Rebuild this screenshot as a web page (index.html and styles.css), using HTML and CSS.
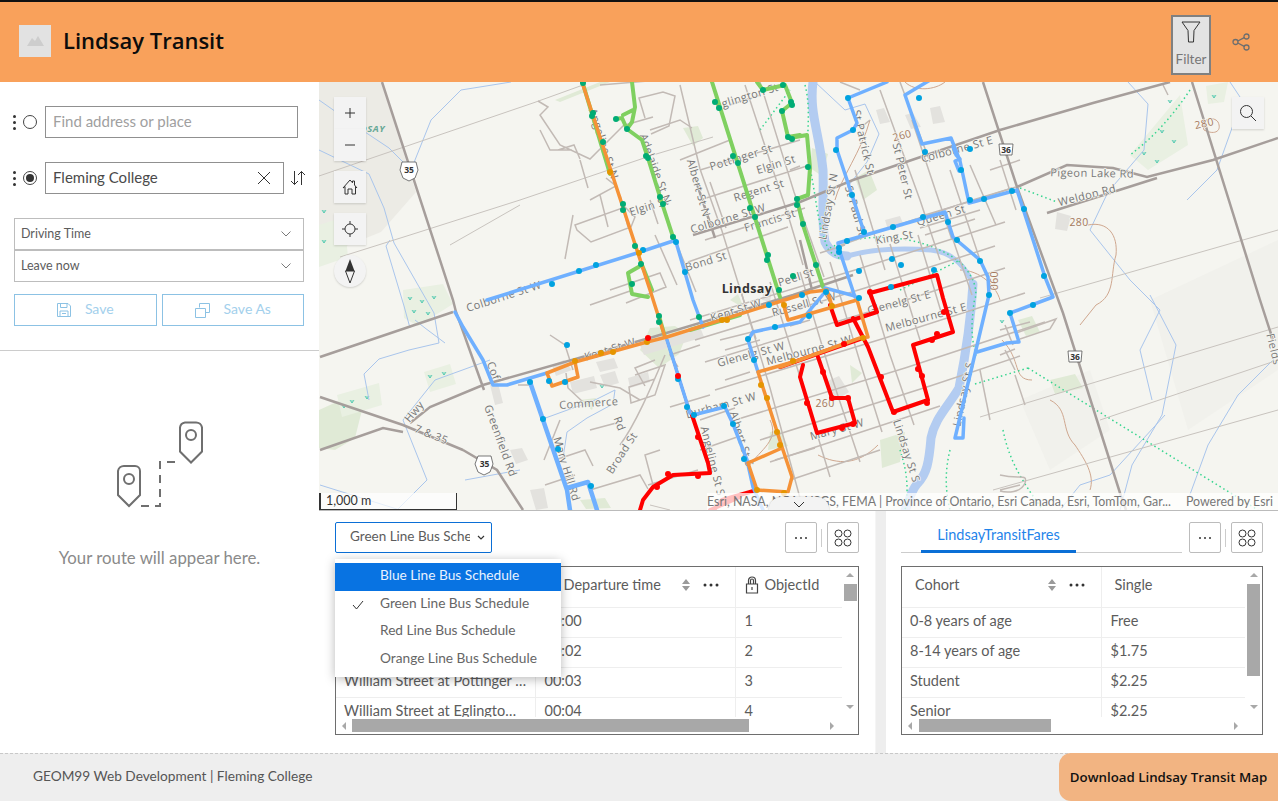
FILE: index.html
```html
<!DOCTYPE html>
<html lang="en">
<head>
<meta charset="utf-8">
<title>Lindsay Transit</title>
<link rel="stylesheet" href="styles.css">
</head>
<body>
<div class="app">
<header class="topbar">
  <div class="logo"><svg width="32" height="32" viewBox="0 0 32 32"><path class="logo-m" d="M8 21l5-8 3 3 3-5 6 10z"/></svg></div>
  <h1 class="title">Lindsay Transit</h1>
  <div class="top-actions">
    <button class="filter-btn"><svg width="20" height="22" viewBox="0 0 20 22"><path class="ico" d="M1 1h18l-6 8.500-.5 11.500h-5L7 9.500z" stroke-width="1.200"/></svg><span>Filter</span></button>
    <svg class="share" width="18" height="18" viewBox="0 0 18 18"><g class="ico-grey"><circle cx="3.500" cy="9" r="2.500"/><circle cx="14.500" cy="3.500" r="2.500"/><circle cx="14.500" cy="14.500" r="2.500"/><path d="M5.800 8l6.400-3.400M5.800 10l6.400 3.400"/></g></svg>
  </div>
</header>
<div class="body">
<aside class="sidebar">
  <section class="form">
    <div class="stop stop-a">
      <span class="grip"><i></i><i></i><i></i></span><span class="radio"></span>
      <div class="input placeholder"><span>Find address or place</span></div>
    </div>
    <div class="stop stop-b">
      <span class="grip"><i></i><i></i><i></i></span><span class="radio on"></span>
      <div class="input"><span>Fleming College</span><svg width="14" height="14" viewBox="0 0 14 14"><path class="ico" d="M1 1l12 12M13 1L1 13"/></svg></div>
      <svg class="swap" width="16" height="16" viewBox="0 0 16 16"><path class="ico" d="M4.500 1v13.500M1 11l3.500 3.500L8 11M11.500 15V1.500M8 5l3.500-3.500L15 5"/></svg>
    </div>
    <div class="selects">
      <div class="select-row"><span>Driving Time</span><svg width="12" height="8" viewBox="0 0 12 8"><path class="chev" d="M1.500 1.500L6 6l4.500-4.500"/></svg></div>
      <div class="select-row"><span>Leave now</span><svg width="12" height="8" viewBox="0 0 12 8"><path class="chev" d="M1.500 1.500L6 6l4.500-4.500"/></svg></div>
    </div>
    <div class="save-row">
      <button class="save"><svg width="14" height="14" viewBox="0 0 14 14"><path class="ico-blue" d="M.5.5h10.500l2.500 2.500v10.500H.5zM3.500.5v4h6.500v-4M3 13.500V8h8v5.500M5 10.500h4"/></svg><span>Save</span></button>
      <button class="save"><svg width="15" height="15" viewBox="0 0 15 15"><path class="ico-blue" d="M4.500 4.500V.5h10v9h-4M.5 5.500h10v9H.5z"/></svg><span>Save As</span></button>
    </div>
  </section>
  <section class="empty">
    <svg width="100" height="100" viewBox="110 415 100 100">
      <g class="pin">
        <path d="M124 466h11a5 5 0 0 1 5 5v24l-11 11-11-11v-24a6 6 0 0 1 6-5z"/>
        <circle cx="129" cy="479" r="5"/>
        <path d="M185 422.500h11a6 6 0 0 1 6 5v24l-11 11-11-11v-24a6 6 0 0 1 5-5z"/>
        <circle cx="191" cy="435" r="5"/>
        <path class="dash" d="M141 506h19v-44h19"/>
      </g>
    </svg>
    <p>Your route will appear here.</p>
  </section>
</aside>
<main class="content">
  <div class="map">
    <svg class="map-svg" width="959" height="429" viewBox="319 82 959 429">
      <rect class="bg" x="319" y="82" width="959" height="429"/>
      <path class="hill" d="M319 82h62l35 110-35 40-62 25z"/>
      <path class="hill-soft" d="M1150 300l128-60v130l-90 60zM1020 400l70-30 20 60-60 40z"/>
      <g class="park">
        <path d="M683 128l15-2 5 12-10 8zM640 350l10-22 25-2 12 8-8 20-20 14zM319 410l22-10 22 6-8 32-20 12-16-2zM580 500l25-2 6 10-25 1zM770 432l10-2 8 16-20 4zM880 440l25-8-5 30-18 6zM1050 380l25-6 8 14-28 6zM855 178l14-8 8 20-14 10zM812 148l16 6-6 22-12-8z"/>
        <path d="M555 100l55-22v4l-50 20zM580 400l16-2-4 12zM1018 320l14-4 8 16-14 4zM850 365l12 8-10 10zM730 300l8-6 6 14z"/>
      </g>
      <g class="wetland">
        <path d="M403 290l40-6 10 20-35 22-14-8zM424 372l26-8 6 20-26 8zM337 395l42-12 3 22-40 12zM1206 86l22-4-4 20-16 2zM1130 155l50-60 8 50-40 25zM319 225l25-8 4 40-29 10z"/>
      </g>
      <path class="wet-ticks" d="M408 297l2 3 2-3m-2 3v-3M420 300l2 3 2-3m-2 3v-3M432 296l2 3 2-3m-2 3v-3M412 310l2 3 2-3m-2 3v-3M426 312l2 3 2-3m-2 3v-3M428 375l2 3 2-3m-2 3v-3M442 372l2 3 2-3m-2 3v-3M350 400l2 3 2-3m-2 3v-3M365 396l2 3 2-3m-2 3v-3M342 405l2 3 2-3m-2 3v-3M1212 95l2 3 2-3m-2 3v-3M1168 100l2 3 2-3m-2 3v-3M1160 130l2 3 2-3m-2 3v-3M1172 140l2 3 2-3m-2 3v-3M1142 152l2 3 2-3m-2 3v-3M1155 160l2 3 2-3m-2 3v-3M322 240l2 3 2-3m-2 3v-3M335 230l2 3 2-3m-2 3v-3M322 210l2 3 2-3m-2 3v-3M600 385l2 3 2-3m-2 3v-3M1000 320l2 3 2-3m-2 3v-3"/>
      <g class="bld">
        <path d="M596 362l18-4 4 10-18 4zM552 365l12-5 8 10-16 6zM570 382l24-6 3 12-24 6zM490 385l5 20 8-2-5-20zM600 375l15-4 4 12-14 4zM628 378l20-6 2 10-20 6zM640 345l60-18 4 10-60 18zM530 490l14-2 4 20-12 2zM510 450l12-2 6 12-12 4zM825 382l14-6 10 16-16 10zM885 220l15-4 4 10-16 4zM876 110l8-2 6 14-10 2zM905 115l8-2 8 14-10 2zM930 108l10-2 5 16-12 2zM1057 212l14 4-4 15-12-2zM764 288l8 2-2 12-8-2z"/>
      </g>
      <g class="stream">
        <path d="M319 100l40 28 30 20 22 22 20-50 30-30 50-8M319 150l50 24 15 34 10 35 40 70 5 30-30 7-30 9-15 15 5 26M390 240l-4 6 18 60 6 22M490 360l-55 20-32 40 24 60-30 30M415 320l10 8 20 15M540 420l55-20 20-10-2 14-26 14-20 14-4 26M320 485l80 25M465 480l55-10"/>
        <path d="M815 82l30 28 20-6 14 30-12 28-22 28M1128 82l20 22-4 46-36 42-18 38 40 50 30 30-20 40 12 50M1150 295l26 50-14 70-30 50-12 45M1278 355l-40 40-30 50-20 55M1165 415l-55 60-30 10-20 25M1230 82l12 18-25 70-30 30"/>
      </g>
      <path class="contour-line" d="M905 82c10 10 30 8 40 0M1088 225c20-4 30 10 28 30-6 20 0 40-20 50l-16 20M1050 400c20 10 10 30 25 45 10 15 20 30 15 45M770 420c10 20-10 30-20 45M818 455c20 10 40 10 60-10M1204 130c-4-12 10-14 14-8 4 8-2 14-14 8zM870 120c-8 30-30 60-35 80M960 270c20 0 36 16 40 30M1002 340c20 20 10 40 30 40"/>
      <path class="river" d="M813 82c-4 30 6 50 10 88 1 30-2 50 2 72 5 10 12 14 22 14"/>
      <path class="river river-thin" d="M847 256c28-8 56-8 84-6 22 2 34 16 42 34"/>
      <path class="river" d="M973 284c-2 35-8 74-14 104-12 20-24 30-28 50-2 24-4 36-14 46-8 10-8 20-12 26"/>
      <g class="trail">
        <path d="M1028 368l230 142M975 384l53-16M1020 188l37 14M1003 430c6 30 18 50 40 80M900 450c5 15 10 35 5 60M950 450c-5 20-5 40 0 60M830 248c30-16 90-16 130 14 10 10 20 26 14 40-2 20-4 30 2 54M805 85c8 30-2 60 6 88 6 30 6 50 18 78l14 10M1190 90c-20 30-40 50-60 65M760 130l30-40M900 290l60-30"/>
      </g>
      <g class="road-thin">
        <path d="M319 176l214-73 50-18M340 257l70-22 110-35 133-45 60-18M450 245l70-40M1040 298l238-68M980 417l298-90M993 490l285-80M650 505l20 5M1100 420l178-60"/>
      </g>
      <g class="road">
        <path d="M538 101l10 6-8 8 20 30 30 14 20-20 15-15M540 130l10 20 22 0M558 150l16-5 6 14M575 225l50-18 10 10-4 10-40 15-14-12zM573 215l-8 44M600 195l8 32M620 195l8 32M580 160l8 28M590 200l26-14-10-8M650 200l8 24M645 118l-6-20 24-6 12 4-6 30-18 8M625 125l28-8M600 85l60-5M680 160l50-20M710 182l16 46M655 235l22 50M676 242l20 50M730 105l30-10M610 290l50-17 6 14-40 16M590 305l40-14"/>
        <path d="M650 130l30-10 12 8M680 85l20 84 22 62 18 58 16 50M745 85l18 55 25 75 15 50M760 82l34 110 30 85M700 170l100-30M700 200l110-35M688 262l100-35M705 240l100-32"/>
        <path d="M690 320l165-50 150-48M695 340l170-52 130-42M705 362l170-52 130-42M715 390l170-52 140-45M735 420l170-52 140-46M760 440l170-54 90-30M770 462l140-46 30-10M790 480l90-30"/>
        <path d="M740 288l30 100 30 110M770 282l30 95 30 100M800 272l30 100 30 90M830 262l30 100 22 70M860 255l30 100 24 70M890 244l30 96M918 235l24 80M948 225l24 70M912 120l40 120M950 170l30 90M970 165l26 60M1000 160l16 50M990 170l30-10M982 198l30-10M925 215l60-18M925 235l50-16M1000 330l30-8M1016 333l40-14 -6 10-30 10M1005 325l8 20M1000 355l15-6M980 370l10 50M1005 350l10 20M1015 375l10 30M1000 475c20 5 28-2 25 8-4 10-18 10-25 8M1000 490l20-5"/>
        <path d="M860 90l-20-8M870 120l-10 8M880 90l40 110 20 60M855 170l30 100M900 82l30 80M550 335l15 10 8 25M655 360l-20 8 10 18M640 400l-20-12-30-6M635 375l30-10-10 30-24 8 -2-16 26-8M665 355c-15 35-30 70-45 90M590 430l30-8M555 460l30-10 8 16M590 490l50-15 8 14M648 485l50-15M545 485l30-10M700 345l-30 10 8 12M710 395l-40 12M700 420l35-12M760 330l-40 10M725 350l35-10M725 380l25-8M660 450l-15 5 8 30M700 450l40-14M775 460l40-12"/>
        <path d="M566 373l2 15 15 14M560 420l-16 40M530 385l-12 0M1163 85l5 10"/>
      </g>
      <g class="road-major">
        <path d="M382 82l71 218 3 12 28 78M463 450l34 20 26 40M320 357l133-45M320 397l83 28 60 25M320 450l63-22 20 4M410 423l20-16 53-22 170-48 140-42 60-20M693 235l107-33 53-22 147-50 93-27 77-21M1017 187l50-22 46 3 34 9 66-17 65-22M1047 213l110-35M983 82l34 105 46 126 57 180 6 17M1192 82l68 218 13 40M695 178l20 60M800 240l12 50"/>
      </g>
      <path class="road" d="M1016 187l-40 12-90 30-50 18M980 210l-60 18M845 245l-25 8M810 320l-20 6M790 170l10-4"/>
      <g class="lbl">
        <text transform="translate(505 300) rotate(-18)">Colborne St W</text>
        <text transform="translate(729 222) rotate(-17)">Colborne St W</text>
        <text transform="translate(611 353) rotate(-17)">Kent St W</text>
        <text transform="translate(737 314) rotate(-17)">Kent St W</text>
        <text transform="translate(707 265) rotate(-17)">Bond St</text>
        <text transform="translate(650 210) rotate(-17)">Elgin St</text>
        <text transform="translate(777 168) rotate(-17)">Elgin St</text>
        <text transform="translate(742 161) rotate(-17)">Pottinger St</text>
        <text transform="translate(760 194) rotate(-17)">Regent St</text>
        <text transform="translate(771 224) rotate(-17)">Francis St</text>
        <text transform="translate(748 100) rotate(-17)">Eglington St</text>
        <text transform="translate(797 281) rotate(-17)">Peel St</text>
        <text transform="translate(695 189) rotate(74)">Albert St N</text>
        <text transform="translate(600 145) rotate(72)">Angeline St N</text>
        <text transform="translate(652 170) rotate(70)">Adelaide St N</text>
        <text transform="translate(860 143) rotate(77)">St Patrick St</text>
        <text transform="translate(852 212) rotate(74)">St Paul St</text>
        <text transform="translate(899 172) rotate(77)">St Peter St</text>
        <text transform="translate(832 207) rotate(-80)">Lindsay St N</text>
        <text transform="translate(958 153) rotate(-15)">Colborne St E</text>
        <text transform="translate(942 219) rotate(-16)">Queen St</text>
        <text transform="translate(895 241) rotate(-10)">King St</text>
        <text transform="translate(1092 177) rotate(1)">Pigeon Lake Rd</text>
        <text transform="translate(1088 199) rotate(-14)">Weldon Rd</text>
        <text transform="translate(900 306) rotate(-15)">Glenelg St E</text>
        <text transform="translate(927 321) rotate(-15)">Melbourne St E</text>
        <text transform="translate(752 358) rotate(-15)">Glenelg St W</text>
        <text transform="translate(722 409) rotate(-15)">Durham St W</text>
        <text transform="translate(810 354) rotate(-15)">Melbourne St W</text>
        <text transform="translate(805 308) rotate(-15)">Russell St W</text>
        <text transform="translate(838 433) rotate(-15)">Mary St W</text>
        <text transform="translate(903 452) rotate(72)">Lindsay St S</text>
        <text transform="translate(967 395) rotate(-78)">Lindsay St S</text>
        <text transform="translate(589 407) rotate(-4)">Commerce</text>
        <text transform="translate(616 425) rotate(70)">Rd</text>
        <text transform="translate(625 455) rotate(-57)">Broad St</text>
        <text transform="translate(497 442) rotate(70)">Greenfield Rd</text>
        <text transform="translate(417 414) rotate(-50)">Hwy</text>
        <text transform="translate(430 438) rotate(22)">7 &amp; 35</text>
        <text transform="translate(709 462) rotate(76)">Angeline St S</text>
        <text transform="translate(738 440) rotate(73)">Albert St S</text>
        <text transform="translate(563 470) rotate(73)">Mary Hill Rd</text>
        <text transform="translate(490 372) rotate(70)">Cof</text>
        <text transform="translate(1270 350) rotate(76)">Fields</text>
        <text class="contour" transform="translate(903 139) rotate(-15)">260</text>
        <text class="contour" transform="translate(1205 127) rotate(-12)">280</text>
        <text class="contour" transform="translate(1079 226)">280</text>
        <text class="contour" transform="translate(825 407)">260</text>
        <text class="contour" transform="translate(990 281) rotate(90)">090</text>
      </g>
      <g class="routes">
        <path class="r-red" d="M667 340l23 73"/>
        <path class="r-red-t" d="M692 415l16 48 2 10-37 2-20 12-10 13-3 10M870 293l67-18 6 23 10 34-40 13 15 55-35 12-25-65 -15-29M877 312l-40 13-7-20M870 293l7 19M818 357l14 41h16l7 25-38 10-17-56 3-12M780 367l80-28M757 490l-35 10-8 10M740 497l-30 13"/>
        <path class="r-green" d="M712 82l68 215M632 82l3 25-3 15-5 7-5-11-6 1M623 115l10-5M627 129l15 11 6 18 12 39 13 40 3 5M642 265l-14 8 4 21 16 3M642 265l10 25M583 84l27 90M757 82l6 8 22-5 7 18-10 8 6 26 12-2M790 138l17-3 3 33-2 27-11 4 6 26 20 62M659 316l6 21M690 330l50-15"/>
        <path class="r-blue" d="M487 300l150-47 36-12 3 1 17 58 10 27M455 312l8 15 20 33 10 25h14l40-12M693 415l32-8 8 17 14 36 6 27 10 23M748 340l5-8 47-10 25-30M748 340l10 32M667 340l23 73M1010 313l43-16 -8-20-28-87-44 12-4 1-9-42-9-23 -29 6-17-49 52-31M848 98l9 25-4 7-16 8v12l15 45 12 37M848 98l39-16M838 243l107-31 8 25 27 23 8 17 1 18-34 143 8 0 1-20M977 352l30-9 12-1-9-29M838 243l2 9 15 45M855 296l-30-8"/>
        <path class="r-blue-w" d="M530 382l37 108 3 20M567 488l21-6 9 28"/>
        <path class="r-blue" d="M953 147l3 8 4 4-5 2 4 10"/>
        <path class="r-orange" d="M582 82l68 208 15 47M667 337l-20 5-72 20-28 11 5 13 26-9-3-15M667 337l143-45 17-2M783 303l5 17 69-20 11 37-8 1-80 29M758 372l24 75 10 30-4 15-31-2M748 463l34-15M748 463l9 27M758 372l42-12M827 290l5 16"/>
      </g>
      <g class="dot d-green"><path d="M583 83h0M593 113h0M592 116h0M603 142h0M616 119h0M627 129h0M646 156h0M648 158h0M660 197h0M663 204h0M623 204h0M623 210h0M635 246h0M641 264h0M632 284h0M673 237h0M715 102h0M719 108h0M733 156h0M738 163h0M750 208h0M755 217h0M768 255h0M767 260h0M779 290h0M793 276h0M763 90h0M783 85h0M791 102h0M792 105h0M782 111h0M788 137h0M792 139h0M797 199h0M797 205h0M808 167h0M803 224h0M816 265h0M659 316h0M659 322h0M699 317h0"/></g>
      <g class="dot d-blue"><path d="M552 284h0M579 271h0M596 265h0M643 250h0M676 242h0M685 272h0M848 98h0M853 130h0M836 150h0M852 195h0M864 232h0M847 241h0M839 248h0M839 252h0M893 227h0M923 217h0M948 222h0M957 240h0M980 261h0M989 295h0M1044 276h0M1024 209h0M1012 191h0M984 199h0M970 200h0M961 170h0M970 149h0M925 152h0M919 98h0M892 259h0M901 265h0M859 271h0M826 292h0M802 295h0M859 298h0M891 287h0M934 270h0M1010 313h0M1033 305h0M809 316h0M567 345h0M530 382h0M543 419h0M558 449h0M591 486h0M549 381h0M565 382h0M678 379h0M687 407h0M694 415h0M724 406h0M733 424h0M744 459h0M748 339h0M754 360h0M775 327h0M769 305h0"/></g>
      <g class="dot d-orange"><path d="M575 361h0M601 353h0M613 352h0M647 342h0M722 320h0M727 320h0M784 305h0M761 385h0M767 398h0M777 432h0M780 445h0M793 361h0M757 490h0M784 493h0M863 338h0M832 306h0M610 172h0M639 253h0"/></g>
      <g class="dot d-red"><path d="M678 376h0M648 338h0M698 437h0M668 474h0M698 476h0M657 487h0M944 312h0M937 334h0M932 340h0M918 369h0M922 376h0M927 403h0M894 412h0M881 377h0M844 344h0M823 372h0M807 403h0M848 398h0M832 398h0M842 428h0M853 424h0M870 292h0"/></g>
      <text class="city" x="747" y="293">Lindsay</text>
      <text class="area" x="385" y="132">LINDSAY</text>
      <g class="shield">
        <path d="M402 162h14l2 8-3 8-6 3-6-3-3-8z"/><text x="409" y="173">35</text>
        <path d="M478 456h13l2 8-3 8-6 3-6-3-3-8z"/><text x="484.500" y="467">35</text>
        <path d="M999 144h14l-1 11h-12z"/><text x="1006" y="153">36</text>
        <path d="M1068 351h14l-1 11h-12z"/><text x="1075" y="360">36</text>
      </g>
    </svg>
    <div class="map-tools">
      <div class="tool-group">
        <button class="tool"><svg width="12" height="12" viewBox="0 0 12 12"><path class="ico" d="M6 1v10M1 6h10"/></svg></button>
        <button class="tool"><svg width="12" height="12" viewBox="0 0 12 12"><path class="ico" d="M1 6h10"/></svg></button>
      </div>
      <button class="tool"><svg width="16" height="16" viewBox="0 0 16 16"><path class="ico" d="M3 15V7.500L1 9l7-8 2.500 2.800V2h2v4l2.500 3-1.500-1.500V15H10v-5H6v5z"/></svg></button>
      <button class="tool"><svg width="16" height="16" viewBox="0 0 16 16"><g class="ico"><circle cx="8" cy="8" r="5"/><path d="M8 0v3M8 13v3M0 8h3M13 8h3"/></g></svg></button>
      <button class="tool round"><svg width="10" height="24" viewBox="0 0 10 24"><path class="needle" d="M5 0L.5 12h9z"/><path class="ico" d="M.5 12h9L5 24z"/></svg></button>
    </div>
    <button class="tool search"><svg width="18" height="18" viewBox="0 0 18 18"><g class="ico"><circle cx="7.500" cy="7.500" r="6"/><path d="M12 12l5 5"/></g></svg></button>
    <div class="scale">1,000 m</div>
    <div class="attrib"><span class="attrib-src">Esri, NASA, NGA, USGS, FEMA | Province of Ontario, Esri Canada, Esri, TomTom, Gar...</span><span>Powered by Esri</span></div>
    <button class="collapse"><svg width="12" height="7" viewBox="0 0 12 7"><path class="ico" d="M1 1l5 5 5-5"/></svg></button>
  </div>
  <div class="panels">
    <section class="panel panel-left">
      <div class="panel-bar">
        <button class="ddl"><span class="ddl-text">Green Line Bus Schedule</span><svg width="8" height="6" viewBox="0 0 8 6"><path class="ddl-chev" d="M1 1l3 3 3-3"/></svg></button>
        <div class="bar-actions">
          <button class="sq"><svg width="14" height="4" viewBox="0 0 14 4"><g class="dots3"><circle cx="2" cy="2" r="1"/><circle cx="7" cy="2" r="1"/><circle cx="12" cy="2" r="1"/></g></svg></button>
          <span class="sep"></span>
          <button class="sq"><svg width="18" height="18" viewBox="0 0 18 18"><g class="ico"><circle cx="4.500" cy="4.500" r="3.500"/><circle cx="13.500" cy="4.500" r="3.500"/><circle cx="4.500" cy="13.500" r="3.500"/><circle cx="13.500" cy="13.500" r="3.500"/></g></svg></button>
        </div>
      </div>
      <div class="grid-box">
        <div class="grid-view">
          <table class="tbl tbl-left">
            <colgroup><col class="c199"><col class="c200"><col></colgroup>
            <thead><tr>
              <th><div class="th"><span class="th-label">Stop</span></div></th>
              <th><div class="th locked"><span class="th-label">Departure time</span><svg class="sort" width="8" height="12" viewBox="0 0 8 12"><path d="M4 0l4 5H0zM4 12L0 7h8z"/></svg><svg class="more" width="16" height="4" viewBox="0 0 16 4"><circle cx="2" cy="2" r="1.500"/><circle cx="8" cy="2" r="1.500"/><circle cx="14" cy="2" r="1.500"/></svg></div></th>
              <th><div class="th lock-th"><svg width="14" height="18" viewBox="0 0 14 18"><path class="lock" d="M1.500 8h11v9h-11zM3.500 8V4.500a3.500 3.500 0 0 1 7 0V8M5.500 8V4.500a1.500 1.500 0 0 1 3 0V8M7 11v3"/></svg><span class="th-label">ObjectId</span></div></th>
            </tr></thead>
            <tbody>
              <tr><td>Lindsay Square Mall</td><td>00:00</td><td>1</td></tr>
              <tr><td>William Street at Orchard</td><td>00:02</td><td>2</td></tr>
              <tr><td>William Street at Pottinger …</td><td>00:03</td><td>3</td></tr>
              <tr><td>William Street at Eglingto…</td><td>00:04</td><td>4</td></tr>
            </tbody>
          </table>
          <div class="vbar"><i class="up"></i><b class="v-thumb-left"></b><i class="down"></i></div>
        </div>
        <div class="hbar"><i class="left"></i><div class="h-track"><b class="h-thumb-left"></b></div><i class="right"></i></div>
      </div>
      <ul class="menu">
        <li class="active">Blue Line Bus Schedule</li>
        <li><svg width="12" height="10" viewBox="0 0 12 10"><path class="ico" d="M1 5l3.500 4L11 1"/></svg>Green Line Bus Schedule</li>
        <li>Red Line Bus Schedule</li>
        <li>Orange Line Bus Schedule</li>
      </ul>
    </section>
    <div class="gutter"></div>
    <section class="panel panel-right">
      <div class="panel-bar">
        <div class="tabs"><span class="tab">LindsayTransitFares</span></div>
        <div class="bar-actions">
          <button class="sq"><svg width="14" height="4" viewBox="0 0 14 4"><g class="dots3"><circle cx="2" cy="2" r="1"/><circle cx="7" cy="2" r="1"/><circle cx="12" cy="2" r="1"/></g></svg></button>
          <span class="sep"></span>
          <button class="sq"><svg width="18" height="18" viewBox="0 0 18 18"><g class="ico"><circle cx="4.500" cy="4.500" r="3.500"/><circle cx="13.500" cy="4.500" r="3.500"/><circle cx="4.500" cy="13.500" r="3.500"/><circle cx="13.500" cy="13.500" r="3.500"/></g></svg></button>
        </div>
      </div>
      <div class="grid-box">
        <div class="grid-view">
          <table class="tbl tbl-right">
            <colgroup><col class="c199"><col></colgroup>
            <thead><tr>
              <th><div class="th plain"><span class="th-label">Cohort</span><svg class="sort" width="8" height="12" viewBox="0 0 8 12"><path d="M4 0l4 5H0zM4 12L0 7h8z"/></svg><svg class="more" width="16" height="4" viewBox="0 0 16 4"><circle cx="2" cy="2" r="1.500"/><circle cx="8" cy="2" r="1.500"/><circle cx="14" cy="2" r="1.500"/></svg></div></th>
              <th><div class="th plain"><span class="th-label">Single</span></div></th>
            </tr></thead>
            <tbody>
              <tr><td>0-8 years of age</td><td>Free</td></tr>
              <tr><td>8-14 years of age</td><td>$1.75</td></tr>
              <tr><td>Student</td><td>$2.25</td></tr>
              <tr><td>Senior</td><td>$2.25</td></tr>
            </tbody>
          </table>
          <div class="vbar vbar-wide"><i class="up"></i><b class="v-thumb-right"></b><i class="down"></i></div>
        </div>
        <div class="hbar"><i class="left"></i><div class="h-track"><b class="h-thumb-right"></b></div><i class="right"></i></div>
      </div>
    </section>
  </div>
</main>
</div>
<footer class="footer">
  <span class="foot-text">GEOM99 Web Development | Fleming College</span>
  <button class="download">Download Lindsay Transit Map</button>
</footer>
</div>
</body>
</html>
```
FILE: styles.css
```css
* { box-sizing: border-box; }
html, body { margin: 0; height: 100%; }
body { font-family: "Lato", "Liberation Sans", sans-serif; font-size: 14px; color: #5c5c5c; background: #fff; overflow: hidden; }
button { font: inherit; color: inherit; padding: 0; background: none; border: 0; }
.app { display: flex; flex-direction: column; height: 801px; width: 1278px; }

.topbar { height: 82px; flex: none; background: #f9a15b; border-top: 2px solid #111; display: flex; align-items: center; padding-left: 19px; }
.logo { width: 32px; height: 32px; background: #e2e2e2; margin-top: -2px; }
.logo-m { fill: #cdcdcd; }
.title { margin: -4px 0 0 12px; font: 600 22px "Open Sans", sans-serif; color: #0c0c0c; }
.top-actions { margin-left: auto; display: flex; align-items: center; }
.filter-btn { width: 40px; height: 60px; background: #e3e3e3; border: 2px solid #808080; display: flex; flex-direction: column; align-items: center; padding-top: 4px; gap: 8px; font-size: 13.500px; line-height: 16px; color: #777; margin-top: 6px; }
.share { margin: 0 28px 0 21px; }
.ico, .ico-grey, .ico-blue, .chev, .pin, .lock, .dots3 { fill: none; stroke-width: 1; }
.ico { stroke: #333; }
.ico-grey { stroke: #6e6e6e; stroke-width: 1.300; }
.ico-blue { stroke: #8cc2e4; }
.chev { stroke: #7a7a7a; }

.body { flex: 1; display: flex; min-height: 0; }
.sidebar { width: 319px; flex: none; display: flex; flex-direction: column; }
.form { padding: 24px 15px 24px 14px; display: flex; flex-direction: column; border-bottom: 1px solid #ccc; height: 269px; }
.stop { display: flex; align-items: center; height: 32px; margin-left: -1px; margin-bottom: 24px; }
.grip { display: flex; flex-direction: column; gap: 3px; width: 3px; margin-right: 7px; }
.grip i { width: 3px; height: 3px; background: #333; border-radius: 50%; }
.radio { width: 14px; height: 14px; border: 1px solid #444; border-radius: 50%; margin-right: 8px; flex: none; position: relative; }
.radio.on::after { content: ""; display: block; width: 8px; height: 8px; margin: 2px; border-radius: 50%; background: #333; }
.input { height: 32px; border: 1px solid #909090; flex: none; display: flex; align-items: center; padding: 0 8px 0 7px; justify-content: space-between; color: #4a4a4a; font-size: 15px; }
.input span { padding-bottom: 3px; }
.stop-a .input { width: 253px; }
.stop-b .input { width: 239px; padding-right: 12px; }
.input.placeholder { color: #a0a0a0; }
.swap { margin-left: 6px; flex: none; }
.selects { display: flex; flex-direction: column; }
.select-row { height: 32px; border: 1px solid #bdbdbd; display: flex; align-items: center; justify-content: space-between; padding: 0 11px 0 6px; font-size: 12.500px; color: #5c5c5c; }
.select-row span { padding-bottom: 2px; }
.save-row { display: flex; gap: 5px; margin-top: 12px; }
.save { height: 32px; flex: 1; border: 1px solid #8cc2e4; color: #a3d0ec; display: flex; align-items: center; justify-content: center; gap: 14px; }
.save span { padding-bottom: 3px; }
.empty { flex: 1; display: flex; flex-direction: column; align-items: center; padding-top: 64px; }
.empty svg { display: block; }
.pin { stroke: #6f6f6f; stroke-width: 2; }
.dash { stroke-dasharray: 8 6; }
.empty p { margin: 33px 0 0; font-size: 16.800px; color: #8a8a8a; line-height: 20px; }

.content { flex: 1; display: flex; flex-direction: column; min-width: 0; }
.map { height: 429px; flex: none; position: relative; overflow: hidden; }
.map-svg { display: block; }
.bg { fill: #f5f5f0; }
.hill { fill: #ecebe5; }
.hill-soft { fill: #f1f1ec; }
.park path { fill: #e0ead6; }
.wetland path { fill: #e9f0e2; }
.wet-ticks { fill: none; stroke: #5fcdb4; stroke-width: 1; }
.bld path { fill: #e3e2de; }
.stream { fill: none; stroke: #a9c5ec; stroke-width: 1; }
.contour-line { fill: none; stroke: #cfa78f; stroke-width: 1; }
.river { fill: none; stroke: #b3ccf1; stroke-width: 9; stroke-linejoin: round; stroke-linecap: round; }
.river-thin { stroke-width: 5; }
.trail { fill: none; stroke: #37d58f; stroke-width: 1.500; stroke-dasharray: 1.500 3; }
.road-thin { fill: none; stroke: #c8c3be; stroke-width: 1; }
.road { fill: none; stroke: #c2bab5; stroke-width: 1.500; }
.road-major { fill: none; stroke: #a69e9b; stroke-width: 2.500; }
.routes path { fill: none; stroke-linejoin: round; stroke-linecap: round; }
.r-red { stroke: #f00; stroke-width: 2.500; }
.r-red-t { stroke: #f00; stroke-width: 4; }
.r-green { stroke: #7fd060; stroke-width: 4; }
.r-blue { stroke: #6fb0ff; stroke-width: 3.500; }
.r-blue-w { stroke: #6fb0ff; stroke-width: 4.500; }
.r-orange { stroke: #f59237; stroke-width: 3.500; }
.dot path { fill: none; stroke-width: 6; stroke-linecap: round; }
.d-green path { stroke: #00ac75; }
.d-blue path { stroke: #00a2e0; }
.d-orange path { stroke: #e59500; }
.d-red path { stroke: #f00; }
.lbl text { font: 11px "Open Sans", sans-serif; fill: #777; stroke: #f5f5f0; stroke-width: 1.500; paint-order: stroke; text-anchor: middle; letter-spacing: .4px; }
.lbl text.contour { fill: #a4785c; font-size: 10.500px; }
.city { font: 700 12.500px "Open Sans", sans-serif; fill: #333; stroke: #f5f5f0; stroke-width: 2; paint-order: stroke; text-anchor: middle; letter-spacing: .4px; }
.area { font: italic 700 9.500px "Open Sans", sans-serif; fill: #68a896; text-anchor: end; letter-spacing: .5px; }
.shield path { fill: #fff; stroke: #555; stroke-width: .8; }
.shield text { font: 700 8.500px "Open Sans", sans-serif; fill: #333; text-anchor: middle; }

.map-tools { position: absolute; left: 15px; top: 15px; display: flex; flex-direction: column; gap: 10px; }
.tool-group { display: flex; flex-direction: column; }
.tool { width: 32px; height: 32px; background: #f3f3f3; display: flex; align-items: center; justify-content: center; box-shadow: 0 1px 2px rgba(0,0,0,.15); }
.tool.round { border-radius: 50%; }
.needle { fill: #333; }
.search { position: absolute; right: 14px; top: 15px; }
.scale { position: absolute; left: 0; bottom: 0; width: 138px; height: 18px; background: rgba(255,255,255,.7); border: 1px solid #333; border-width: 0 1px 2px 2px; font-size: 12.500px; padding-left: 5px; line-height: 15px; color: #333; }
.attrib { position: absolute; left: 388px; right: 0; bottom: 0; height: 18px; background: rgba(255,255,255,.75); display: flex; justify-content: space-between; padding: 0 5px 0 0; font-size: 12.400px; line-height: 17px; color: #777; white-space: nowrap; }
.attrib-src { width: 470px; overflow: hidden; }
.collapse { position: absolute; left: 450px; bottom: 0; width: 60px; height: 14px; background: #f3f3f3; border-radius: 12px 12px 0 0; display: flex; align-items: center; justify-content: center; box-shadow: 0 0 2px rgba(0,0,0,.25); }

.panels { flex: 1; display: flex; border-top: 1px solid #bbb; min-height: 0; margin-top: -1px; position: relative; background: #fff; }
.panel { position: relative; display: flex; flex-direction: column; }
.panel-left { width: 556px; padding: 11px 16px 0 16px; }
.panel-right { flex: 1; padding: 11px 15px 0 15px; }
.gutter { width: 11px; background: #eee; border-left: 1px solid #f5f5f5; }
.panel-bar { display: flex; justify-content: space-between; height: 31px; margin-bottom: 13px; }
.ddl { width: 157px; height: 31px; border: 1px solid #0b6fd6; border-radius: 2px; display: flex; align-items: center; padding: 0 6px 0 14px; justify-content: space-between; font-size: 13.500px; }
.ddl-text { width: 120px; overflow: hidden; white-space: nowrap; text-align: left; padding-bottom: 3px; }
.ddl-chev { fill: none; stroke: #333; stroke-width: 1.200; }
.bar-actions { display: flex; align-items: center; }
.sq { width: 32px; height: 31px; border: 1px solid #bcbcbc; border-radius: 2px; display: flex; align-items: center; justify-content: center; }
.sep { width: 1px; height: 18px; background: #ccc; margin: 0 5px 0 4px; }
.dots3 { fill: #333; }
.tabs { width: 281px; border-bottom: 1px solid #ccc; height: 31px; padding-left: 20px; }
.tab { display: block; width: 155px; height: 31px; border-bottom: 3px solid #0b6fd6; color: #1f84ea; text-align: center; line-height: 26px; font-size: 14.500px; white-space: nowrap; }

.grid-box { border: 1px solid #6e6e6e; height: 169px; display: flex; flex-direction: column; overflow: hidden; }
.grid-view { display: flex; height: 150px; flex: none; overflow: hidden; }
.tbl { border-collapse: collapse; table-layout: fixed; flex: 1; width: 0; align-self: flex-start; }
.c199 { width: 199px; }
.c200 { width: 200px; }
.tbl th { height: 40px; padding: 0; font-weight: 400; border-right: 1px solid #eee; border-bottom: 1px solid #eee; text-align: left; }
.tbl td { height: 30px; padding: 0 9px 3px; border-right: 1px solid #eee; border-bottom: 1px solid #eee; white-space: nowrap; overflow: hidden; font-size: 14.500px; color: #5c5c5c; }
.tbl td:first-child { padding-left: 8px; }
.tbl tr > :last-child { border-right: 0; }
.th { display: flex; align-items: center; padding: 0 16px 4px 13px; height: 39px; font-size: 14.500px; }
.th.locked { padding-left: 28px; }
.th.lock-th { padding-left: 9px; gap: 6px; }
.th-label { flex: 1; }
.sort { fill: #9a9a9a; margin-right: 13px; }
.more { fill: #333; }
.lock { stroke: #444; stroke-width: 1.200; }
.vbar { width: 16px; flex: none; display: flex; flex-direction: column; align-items: center; padding-top: 6px; position: relative; }
.vbar-wide { width: 17px; }
.vbar i, .hbar i { display: block; width: 0; height: 0; border: 4px solid transparent; flex: none; }
.vbar .up { border-bottom: 4px solid #a8a8a8; border-top: 0; }
.vbar .down { border-top: 4px solid #a8a8a8; border-bottom: 0; position: absolute; bottom: 8px; }
.v-thumb-left { width: 13px; height: 17px; background: #a8a8a8; margin-top: 7px; }
.v-thumb-right { width: 13px; height: 92px; background: #a8a8a8; margin-top: 7px; }
.hbar { flex: 1; display: flex; align-items: center; padding: 0 24px 0 6px; }
.hbar .left { border-right: 4px solid #a8a8a8; border-left: 0; }
.hbar .right { border-left: 4px solid #a8a8a8; border-right: 0; }
.h-track { flex: 1; height: 13px; }
.h-track b { display: block; height: 13px; background: #a8a8a8; }
.h-thumb-left { width: 397px; margin-left: 6px; }
.h-thumb-right { width: 132px; margin-left: 7px; }

.menu { position: absolute; left: 16px; top: 48px; width: 226px; height: 118px; margin: 0; padding: 4px 0 0; list-style: none; background: #fff; box-shadow: 0 2px 10px rgba(0,0,0,.28); font-size: 13.700px; color: #666; }
.menu li { height: 27.500px; line-height: 24px; padding-left: 45px; position: relative; white-space: nowrap; }
.menu li svg { position: absolute; left: 17px; top: 9px; }
.menu .active { background: #0873e2; color: #e8f2ff; }

.footer { height: 48px; flex: none; background: #eee; border-top: 1px dashed #c8c8c8; display: flex; align-items: center; justify-content: space-between; padding-left: 33px; }
.foot-text { font-size: 13.700px; color: #555; padding-bottom: 4px; }
.download { width: 219px; height: 48px; margin-top: -1px; background: #f2b482; border-radius: 12px 0 0 12px; font: 600 13.300px "Open Sans", sans-serif; color: #111; padding-bottom: 1px; }
```
